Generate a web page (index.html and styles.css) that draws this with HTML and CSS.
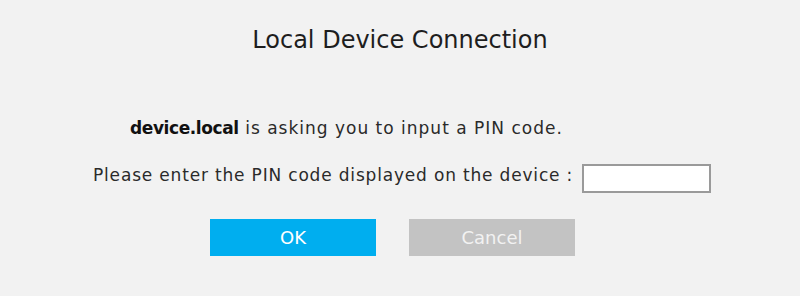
FILE: index.html
```html
<!DOCTYPE html>
<html>
<head>
<meta charset="utf-8">
<link rel="stylesheet" href="styles.css">
</head>
<body>
<div class="dialog">
  <h1 class="title">Local Device Connection</h1>
  <p class="message"><b>device.local</b> is asking you to input a PIN code.</p>
  <div class="pin-row">
    <label class="pin-label" for="pin">Please enter the PIN code displayed on the device :</label>
    <input class="pin-input" id="pin" type="text">
  </div>
  <div class="buttons">
    <button class="btn btn-ok">OK</button>
    <button class="btn btn-cancel">Cancel</button>
  </div>
</div>
</body>
</html>
```
FILE: styles.css
```css
html, body {
  margin: 0;
  padding: 0;
  background: #f2f2f2;
}
body {
  width: 800px;
  height: 296px;
  overflow: hidden;
  font-family: "DejaVu Sans", "Noto Sans", sans-serif;
  color: #222;
}
.dialog {
  display: flex;
  flex-direction: column;
}
.title {
  margin: 24px 0 0;
  font-size: 24px;
  font-weight: 400;
  line-height: 32px;
  text-align: center;
  color: #1e1e1e;
}
.message {
  margin: 60px 0 0 130px;
  font-size: 17px;
  line-height: 24px;
  letter-spacing: 1px;
  color: #2a2a2a;
}
.message b {
  font-weight: 700;
  letter-spacing: -0.4px;
  color: #111;
}
.pin-row {
  display: flex;
  align-items: flex-start;
  margin: 24px 0 0 93px;
  gap: 9px;
}
.pin-label {
  font-size: 17px;
  line-height: 22px;
  letter-spacing: 0.82px;
  color: #2a2a2a;
}
.pin-input {
  width: 125px;
  height: 25px;
  box-sizing: content-box;
  padding: 0;
  margin: 0;
  border: 2px solid #9a9a9a;
  border-radius: 0;
  background: #fff;
}
.buttons {
  display: flex;
  gap: 33px;
  margin: 26px 0 0 210px;
}
.btn {
  width: 166px;
  height: 37px;
  border: none;
  border-radius: 0;
  font-family: inherit;
  font-size: 18px;
  font-weight: 400;
  color: #fff;
  padding: 0;
}
.btn-ok {
  background: #00aeef;
}
.btn-cancel {
  background: #c3c3c3;
  color: #f2f2f2;
}
```
